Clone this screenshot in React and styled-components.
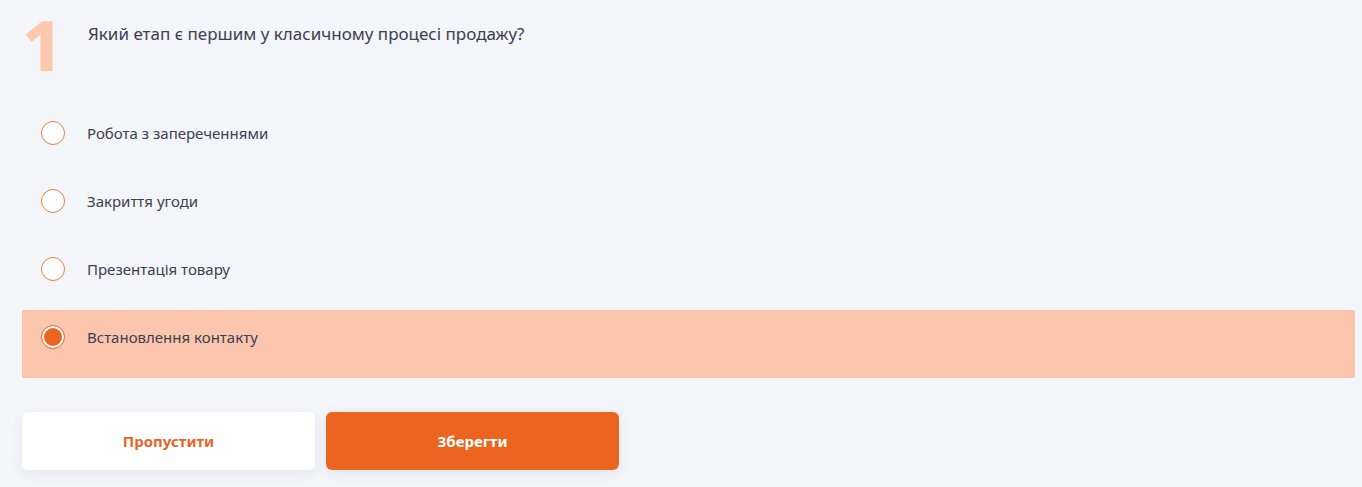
import React, { useState } from "react";
import styled, { createGlobalStyle } from "styled-components";

const options = [
  "Робота з запереченнями",
  "Закриття угоди",
  "Презентація товару",
  "Встановлення контакту",
];

const Quiz = () => {
  const [selected, setSelected] = useState(3);

  return (
    <Page>
      <GlobalStyle />
      <Header>
        <Number>1</Number>
        <Question>Який етап є першим у класичному процесі продажу?</Question>
      </Header>
      <Options>
        {options.map((text, i) => (
          <Option key={text} $active={selected === i} onClick={() => setSelected(i)}>
            <Radio $checked={selected === i} />
            <Label>{text}</Label>
          </Option>
        ))}
      </Options>
      <Actions>
        <Button>Пропустити</Button>
        <Button $primary>Зберегти</Button>
      </Actions>
    </Page>
  );
};

const GlobalStyle = createGlobalStyle`
  body {
    margin: 0;
    background: #f4f5f9;
    font-family: "Noto Sans", "Open Sans", sans-serif;
  }
`;

const Page = styled.div`
  padding: 0 7px 20px 22px;
`;

const Header = styled.div`
  display: flex;
  align-items: flex-start;
`;

const Number = styled.div`
  width: 66px;
  font-family: "Noto Sans", sans-serif;
  font-weight: 800;
  font-size: 70px;
  line-height: 88px;
  color: #fdc9ae;
`;

const Question = styled.div`
  margin-top: 22px;
  font-size: 17px;
  line-height: 24px;
  color: #3b4050;
`;

const Options = styled.div`
  margin-top: 18px;
  display: flex;
  flex-direction: column;
`;

const Option = styled.label`
  height: 68px;
  box-sizing: border-box;
  padding: 15px 19px 0;
  display: flex;
  align-items: flex-start;
  gap: 22px;
  cursor: pointer;
  background: ${(p) => (p.$active ? "#fbc6ad" : "transparent")};
`;

const Radio = styled.span`
  width: 24px;
  height: 24px;
  box-sizing: border-box;
  border-radius: 50%;
  border: 1.5px solid #ef7a3e;
  background: ${(p) => (p.$checked ? "#eb6420" : "#fff")};
  box-shadow: ${(p) => (p.$checked ? "inset 0 0 0 2px #fff" : "none")};
  flex-shrink: 0;
`;

const Label = styled.span`
  font-size: 15px;
  line-height: 24px;
  color: #3b4050;
`;

const Actions = styled.div`
  margin-top: 34px;
  display: flex;
  gap: 11px;
`;

const Button = styled.button`
  width: 293px;
  height: 58px;
  border: none;
  border-radius: 6px;
  font-family: "Noto Sans", "Open Sans", sans-serif;
  font-weight: 700;
  font-size: 15px;
  cursor: pointer;
  background: ${(p) => (p.$primary ? "#eb6420" : "#fff")};
  color: ${(p) => (p.$primary ? "#fff" : "#e8642a")};
  box-shadow: 0 4px 14px rgba(40, 50, 80, 0.07);
`;

export default Quiz;
